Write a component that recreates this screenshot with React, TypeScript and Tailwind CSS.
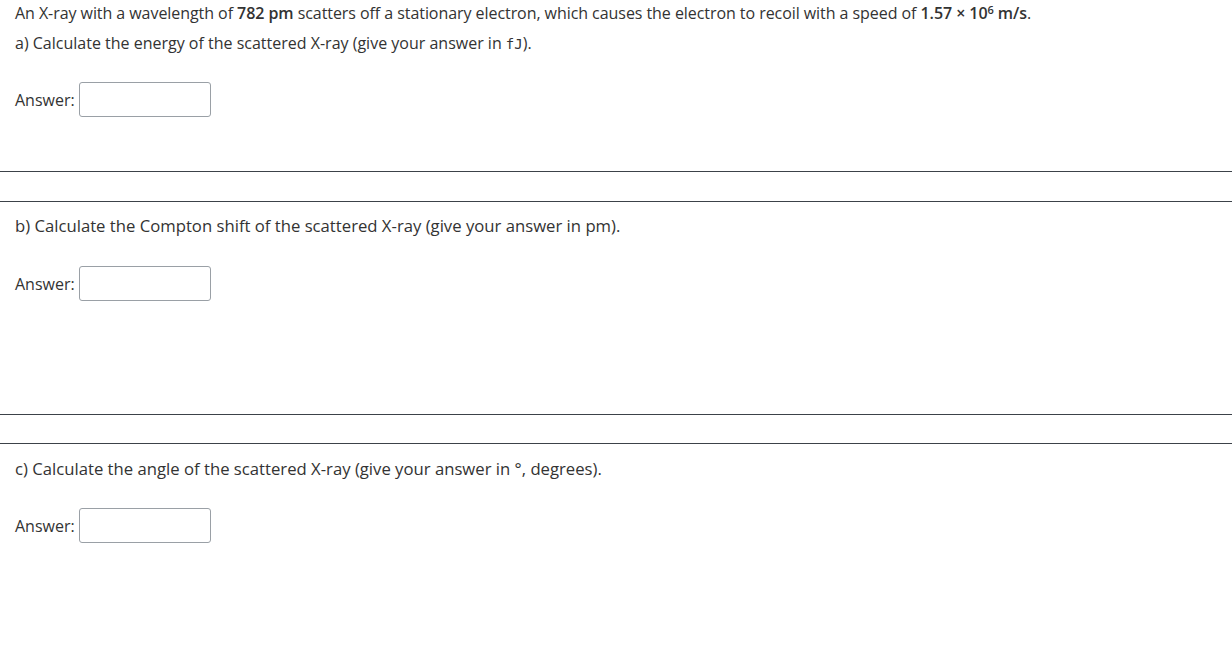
import React from 'react';

function AnswerRow() {
  return (
    <div className="flex items-center gap-[4px] px-[15px]">
      <span className="text-[16px]">Answer:</span>
      <input
        type="text"
        className="w-[132px] h-[35px] border border-[#9aa0a6] rounded-[3px] bg-white outline-none"
      />
    </div>
  );
}

function Divider({ gap }: { gap: string }) {
  return (
    <div className="flex flex-col">
      <div className="h-px bg-[#3c4249]" />
      <div className={gap} />
      <div className="h-px bg-[#3c4249]" />
    </div>
  );
}

export default function App() {
  return (
    <div
      className="min-h-screen w-[1232px] bg-white text-[#333] text-[16px]"
      style={{ fontFamily: '"Open Sans", "Liberation Sans", sans-serif' }}
    >
      {/* part a */}
      <div className="pt-[2px]">
        <p className="px-[15px] leading-[22px] tracking-[-0.06px]">
          An X-ray with a wavelength of <b className="font-semibold">782 pm</b> scatters off a stationary electron,
          which causes the electron to recoil with a speed of{' '}
          <b className="font-semibold">
            1.57 × 10<sup className="text-[11px]">6</sup> m/s
          </b>
          .
        </p>
        <p className="px-[15px] leading-[22px] mt-[8px]">
          a) Calculate the energy of the scattered X-ray (give your answer in{' '}
          <span style={{ fontFamily: '"DejaVu Sans Mono", monospace' }} className="text-[14px]">fJ</span>).
        </p>
        <div className="mt-[27px]">
          <AnswerRow />
        </div>
      </div>

      <div className="mt-[54px]">
        <Divider gap="h-[29px]" />
      </div>

      {/* part b */}
      <p className="px-[15px] leading-[22px] mt-[13px] text-[16.7px]">
        b) Calculate the Compton shift of the scattered X-ray (give your answer in pm).
      </p>
      <div className="mt-[29px]">
        <AnswerRow />
      </div>

      <div className="mt-[113px]">
        <Divider gap="h-[28px]" />
      </div>

      {/* part c */}
      <p className="px-[15px] leading-[22px] mt-[14px] text-[16.7px]">
        c) Calculate the angle of the scattered X-ray (give your answer in °, degrees).
      </p>
      <div className="mt-[28px]">
        <AnswerRow />
      </div>
    </div>
  );
}
